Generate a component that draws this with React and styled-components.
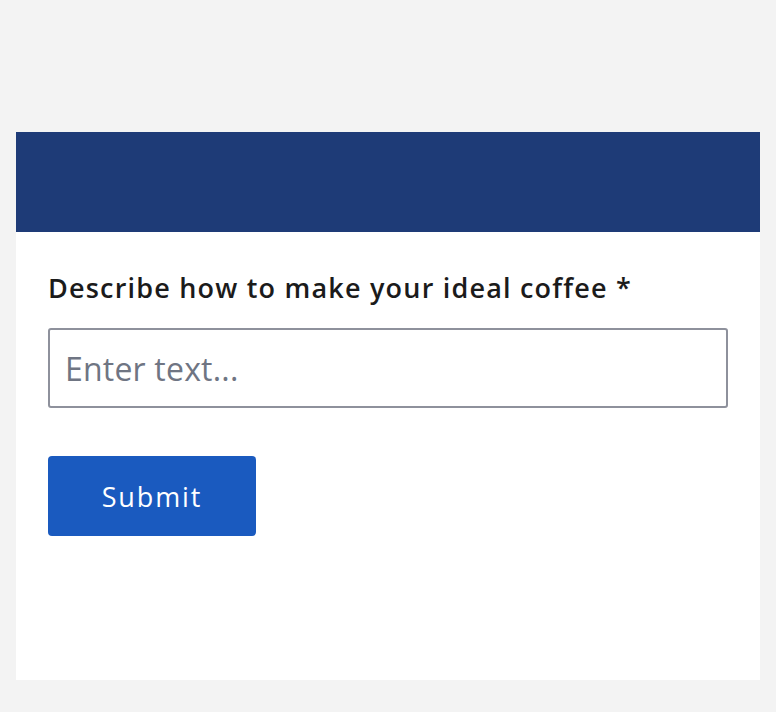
import React from 'react'
import styled, { createGlobalStyle } from 'styled-components'

const Global = createGlobalStyle`
  html, body {
    margin: 0;
    padding: 0;
    background: #f3f3f3;
    font-family: "Open Sans", "Noto Sans", sans-serif;
  }
`

const Page = styled.div`
  padding: 132px 16px 32px;
`

const Card = styled.div`
  background: #ffffff;
  height: 548px;
  display: flex;
  flex-direction: column;
`

const Banner = styled.div`
  height: 100px;
  background: #1e3b77;
`

const Form = styled.form`
  padding: 40px 32px 0;
  display: flex;
  flex-direction: column;
  align-items: flex-start;
`

const Label = styled.label`
  font-size: 27px;
  font-weight: 600;
  color: #1b1b1b;
  letter-spacing: 1.2px;
  line-height: 32px;
  margin-bottom: 24px;
`

const Input = styled.input`
  box-sizing: border-box;
  width: 680px;
  height: 80px;
  border: 2px solid #8e919c;
  border-radius: 3px;
  padding: 0 15px;
  font-family: inherit;
  font-size: 32px;
  letter-spacing: 0.2px;
  color: #161616;
  background: #fff;
  outline: none;
  &::placeholder {
    color: #6f7583;
  }
`

const Button = styled.button`
  margin-top: 48px;
  width: 208px;
  height: 80px;
  border: none;
  border-radius: 4px;
  background: #1a5abf;
  color: #fff;
  font-family: inherit;
  font-size: 27px;
  font-weight: 500;
  letter-spacing: 1.9px;
  cursor: pointer;
`

export default function App() {
  return (
    <>
      <Global />
      <Page>
        <Card>
          <Banner />
          <Form onSubmit={(e) => e.preventDefault()}>
            <Label htmlFor="coffee">Describe how to make your ideal coffee *</Label>
            <Input id="coffee" placeholder="Enter text..." />
            <Button type="submit">Submit</Button>
          </Form>
        </Card>
      </Page>
    </>
  )
}
